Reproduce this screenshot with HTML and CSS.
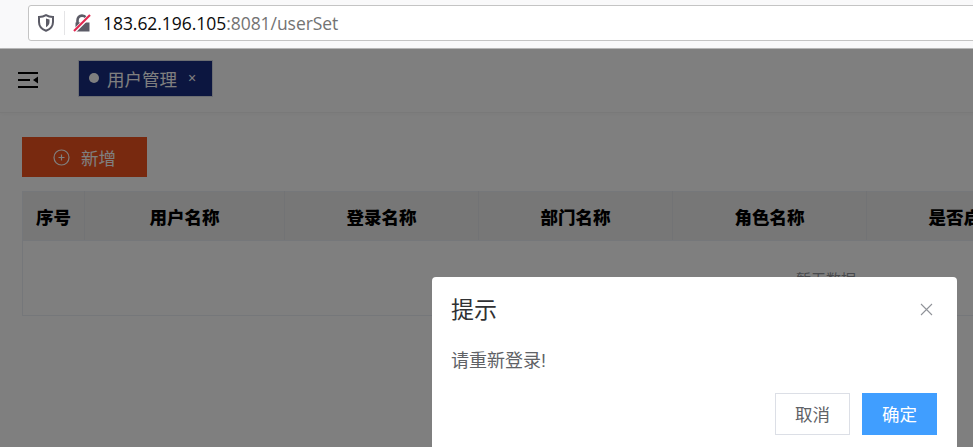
FILE: index.html
```html
<!DOCTYPE html>
<html lang="zh-CN">

<head>
    <meta charset="UTF-8">
    <title>用户管理</title>
    <link rel="stylesheet" href="styles.css">
</head>

<body>
    <div class="browser-bar">
        <div class="url-box">
            <svg class="shield" width="16" height="18" viewBox="0 0 16 18">
                <path d="M8 1.2 C10 2.4 12.6 3 15 3 V8 C15 12 12.2 15.2 8 16.8 C3.8 15.2 1 12 1 8 V3 C3.4 3 6 2.4 8 1.2 Z" fill="none" stroke="#5b5b66" stroke-width="2"/>
                <path d="M8 4.5 C9 5 10.2 5.3 11.5 5.4 V8 C11.5 10.4 10 12.2 8 13.2 Z" fill="#5b5b66"/>
            </svg>
            <span class="url-sep"></span>
            <svg class="lock" width="18" height="18" viewBox="0 0 18 18">
                <path d="M4.5 9 V6.5 C4.5 3.6 6.4 1.6 9 1.6 C10.8 1.6 12.2 2.4 13 3.6" fill="none" stroke="#5b5b66" stroke-width="2.6"/>
                <path d="M2.5 8.5 H16.5 V17.5 H2.5 Z" fill="#5b5b66"/>
                <path d="M1 17.5 L17 1.5" stroke="#fff" stroke-width="4"/>
                <path d="M1 17 L17 1" stroke="#e22850" stroke-width="2.2"/>
            </svg>
            <span class="url-text">183.62.196.105<span class="url-rest">:8081/userSet</span></span>
        </div>
    </div>

    <div class="page">
        <header class="top-nav">
            <svg class="menu-icon" width="20" height="16" viewBox="0 0 20 16">
                <path d="M0 1 H20 M0 8 H12 M0 15 H20" stroke="#000" stroke-width="2"/>
                <path d="M20 4.5 V11.5 L15 8 Z" fill="#000"/>
            </svg>
            <div class="tab">
                <span class="tab-dot"></span>
                <span class="tab-name">用户管理</span>
                <span class="tab-close">×</span>
            </div>
        </header>

        <main class="content">
            <button class="add-button">
                <svg width="17" height="17" viewBox="0 0 17 17">
                    <circle cx="8.5" cy="8.5" r="7.5" fill="none" stroke="#fff" stroke-width="1.2"/>
                    <path d="M8.5 5.5 V11.5 M5.5 8.5 H11.5" stroke="#fff" stroke-width="1.2"/>
                </svg>
                新增
            </button>

            <table class="user-table">
                <thead>
                    <tr>
                        <th class="col-index">序号</th>
                        <th class="col-first">用户名称</th>
                        <th>登录名称</th>
                        <th>部门名称</th>
                        <th>角色名称</th>
                        <th>是否启用</th>
                        <th class="col-fill"></th>
                    </tr>
                </thead>
                <tbody>
                    <tr>
                        <td class="empty" colspan="7">暂无数据</td>
                    </tr>
                </tbody>
            </table>
        </main>
    </div>

    <div class="overlay"></div>

    <div class="dialog">
        <div class="dialog-head">
            <span class="dialog-title">提示</span>
            <svg class="dialog-close" width="13" height="13" viewBox="0 0 13 13">
                <path d="M1 1 L12 12 M12 1 L1 12" stroke="#909399" stroke-width="1.1"/>
            </svg>
        </div>
        <p class="dialog-body">请重新登录!</p>
        <div class="dialog-foot">
            <button class="btn">取消</button>
            <button class="btn btn-primary">确定</button>
        </div>
    </div>
</body>

</html>
```

FILE: styles.css
```css
body {
    margin: 0;
    height: 447px;
    overflow: hidden;
    background-color: #fff;
    font-family: "Liberation Sans", "Noto Sans CJK SC", sans-serif;
    color: #606266;
}

/* browser chrome */
.browser-bar {
    height: 49px;
    box-sizing: border-box;
    padding: 5px 0 0 28px;
    background-color: #f9f9fa;
    border-bottom: 1px solid #b8b8b8;
}

.url-box {
    height: 36px;
    box-sizing: border-box;
    margin-right: -10px;
    display: flex;
    align-items: center;
    background: #fff;
    border: 1px solid #c4c4c4;
    border-radius: 3px;
    padding-left: 9px;
}

.url-sep {
    width: 1px;
    height: 24px;
    margin: 0 8px 0 10px;
    background: #e4e4e6;
}

.lock {
    margin-right: 12px;
}

.url-text {
    font-family: "Open Sans", sans-serif;
    font-size: 17.5px;
    color: #0c0c0d;
    letter-spacing: -0.05px;
}

.url-rest {
    color: #737373;
}

/* page under the mask */
.page {
    width: 1700px;
}

.top-nav {
    height: 64px;
    box-sizing: border-box;
    display: flex;
    align-items: center;
    padding-left: 18px;
    border-bottom: 1px solid #f2f2f2;
    box-shadow: 0 1px 4px rgba(0, 0, 0, 0.04);
}

.menu-icon {
    margin-bottom: 2px;
}

.tab {
    width: 135px;
    height: 37px;
    box-sizing: border-box;
    margin: 0 0 5px 40px;
    display: flex;
    align-items: center;
    background-color: #182c80;
    border: 1px solid #d8dce5;
    color: #fff;
}

.tab-dot {
    width: 10px;
    height: 10px;
    margin: 0 8px 0 10px;
    border-radius: 50%;
    background: #fff;
}

.tab-name {
    font-size: 17.5px;
}

.tab-close {
    font-size: 14px;
    margin-left: 11px;
}

.content {
    padding: 24px 22px 0;
}

.add-button {
    width: 125px;
    height: 40px;
    display: flex;
    align-items: center;
    justify-content: center;
    gap: 11px;
    padding: 0;
    border: none;
    background-color: #f0521e;
    color: #fff;
    font-family: inherit;
    font-size: 17.5px;
}

.user-table {
    width: 1608px;
    margin-top: 14px;
    border-collapse: collapse;
    table-layout: fixed;
    border: 1px solid #ebeef5;
    color: #000;
}

.user-table th {
    width: 194px;
    height: 49px;
    padding: 0;
    box-sizing: border-box;
    background-color: #eeeeee;
    border-right: 1px solid #e4e6ea;
    border-bottom: 1px solid #ebeef5;
    font-size: 17.5px;
    font-weight: 900;
    text-align: center;
}

.user-table th.col-index {
    width: 62px;
}

.user-table th.col-first {
    width: 200px;
}

.user-table th.col-fill {
    width: auto;
}

.empty {
    height: 74px;
    padding: 0;
    text-align: center;
    font-size: 15px;
    color: #909399;
}

/* mask + dialog */
.overlay {
    position: absolute;
    left: 0;
    right: 0;
    top: 49px;
    bottom: 0;
    background: rgba(0, 0, 0, 0.5);
}

.dialog {
    position: absolute;
    left: 432px;
    top: 277px;
    width: 525px;
    height: 190px;
    box-sizing: border-box;
    padding: 0 20px 0 19px;
    background: #fff;
    border-radius: 4px;
}

.dialog-head {
    height: 64px;
    display: flex;
    align-items: center;
    justify-content: space-between;
}

.dialog-title {
    padding-bottom: 2px;
    font-size: 23px;
    color: #303133;
}

.dialog-close {
    margin-right: 4px;
}

.dialog-body {
    margin: 3px 0 0;
    height: 49px;
    line-height: 34px;
    font-size: 18px;
    color: #606266;
}

.dialog-foot {
    display: flex;
    justify-content: flex-end;
    gap: 12px;
}

.btn {
    width: 75px;
    height: 42px;
    padding: 0 0 2px;
    box-sizing: border-box;
    border: 1px solid #dcdfe6;
    background: #fff;
    color: #606266;
    font-family: inherit;
    font-size: 17.5px;
}

.btn-primary {
    background: #409eff;
    border-color: #409eff;
    color: #fff;
}
```
